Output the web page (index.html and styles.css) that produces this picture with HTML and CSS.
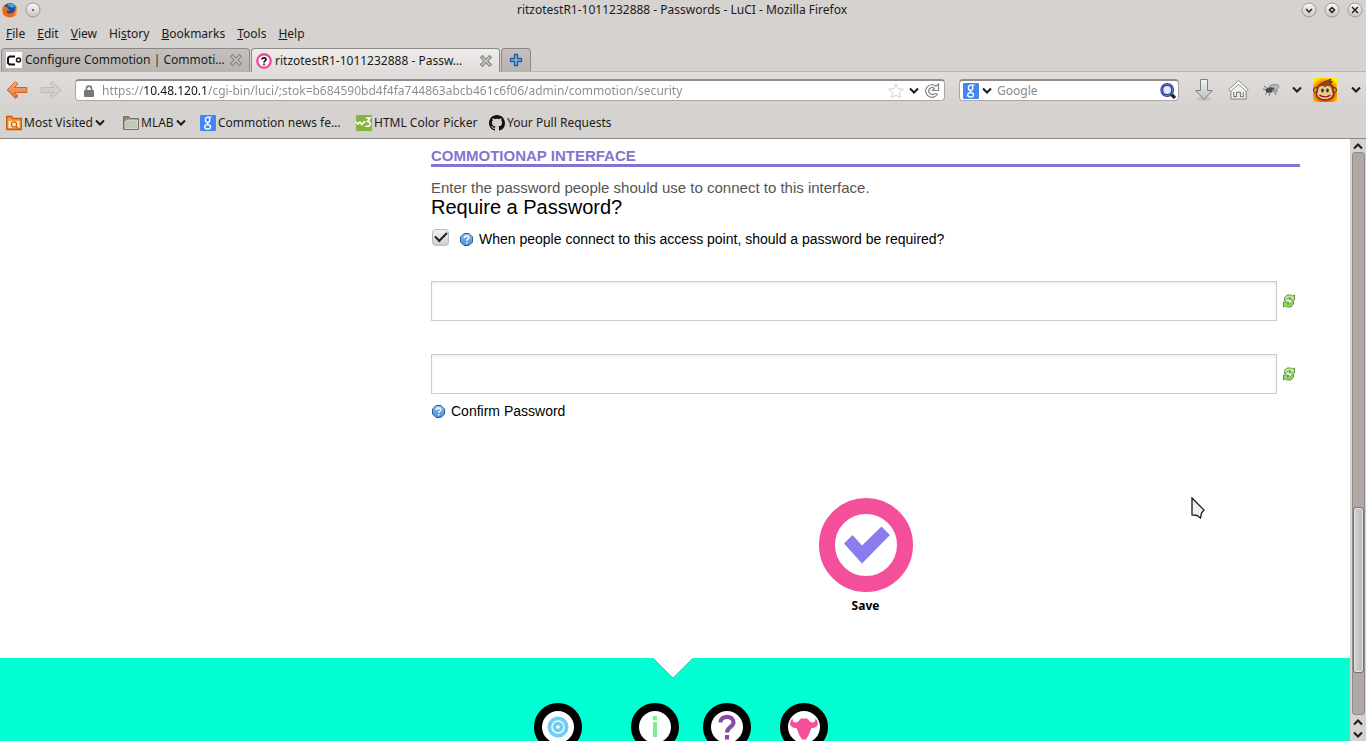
FILE: index.html
```html
<!DOCTYPE html>
<html lang="en">
<head>
<meta charset="utf-8">
<title>ritzotestR1-1011232888 - Passwords - LuCI</title>
<link rel="stylesheet" href="styles.css">
</head>
<body>
<svg class="defs" aria-hidden="true">
  <defs>
    <linearGradient id="g-orange" x1="0" y1="0" x2="0" y2="1"><stop offset="0" stop-color="#f8b184"/><stop offset="1" stop-color="#e8702a"/></linearGradient>
    <linearGradient id="g-button" x1="0" y1="0" x2="0" y2="1"><stop offset="0" stop-color="#fafafa"/><stop offset="1" stop-color="#c9c6c3"/></linearGradient>
    <linearGradient id="g-grey" x1="0" y1="0" x2="0" y2="1"><stop offset="0" stop-color="#f4f4f2"/><stop offset="1" stop-color="#b9c0c4"/></linearGradient>
    <linearGradient id="g-blue" x1="0" y1="0" x2="0" y2="1"><stop offset="0" stop-color="#8fc0ee"/><stop offset="1" stop-color="#3f8fe0"/></linearGradient>
    <radialGradient id="g-fire" cx="50%" cy="60%" r="65%"><stop offset="0" stop-color="#f03000"/><stop offset=".6" stop-color="#ff5a00"/><stop offset="1" stop-color="#fff000"/></radialGradient>
    <symbol id="chevron" viewBox="0 0 10 8"><path d="M1 1.5l4 4 4-4" fill="none" stroke="#1b1b1b" stroke-width="2"/></symbol>
    <symbol id="google" viewBox="0 0 16 16"><rect width="16" height="16" rx="1" fill="#4285f4"/><ellipse cx="7.6" cy="4.8" rx="2.2" ry="2.7" fill="none" stroke="#fff" stroke-width="1.4"/><path d="M8.5 2h3.2M8.6 7.4c-2 1-1.600 1.500-.2 2.300" fill="none" stroke="#fff" stroke-width="1.200"/><ellipse cx="7.600" cy="11.800" rx="2.900" ry="2.200" fill="none" stroke="#fff" stroke-width="1.400"/></symbol>
    <symbol id="close" viewBox="0 0 12 12"><path d="M2.500 2.500l7 7M9.500 2.500l-7 7" stroke="#85857f" stroke-width="3.800" stroke-linecap="square"/><path d="M2.500 2.500l7 7M9.500 2.500l-7 7" stroke="#c6c4be" stroke-width="1.600" stroke-linecap="square"/></symbol>
    <symbol id="hint" viewBox="0 0 13 13"><path d="M4 .5h5l3.500 3.500v5L9 12.500H4L.5 9V4z" fill="url(#g-blue)" stroke="#2d5f93"/><path d="M4.500 5c0-2.600 4.200-2.600 4.200-.2 0 1.500-2 1.500-2 3M6.700 9v1.500" fill="none" stroke="#fff" stroke-width="1.500"/></symbol>
    <symbol id="refresh" viewBox="0 0 12 14"><path d="M1.500 6.500V4L4 1h4.500l1.200 1.200L11.500 1v5H6.200v-1L8 4H5L3 6.500z" fill="#c4ec9e" stroke="#4f8f2a" stroke-width=".9"/><path d="M10.500 7.500V10L8 13H3.500l-1.200-1.200L.5 13V8h5.300v1L4 10h3l2-2.500z" fill="#9ddc62" stroke="#4f8f2a" stroke-width=".9"/></symbol>
  </defs>
</svg>

<header class="browser">
  <div class="titlebar">
    <svg class="ico-16" viewBox="0 0 16 16"><circle cx="8" cy="8" r="7" fill="#1c4f9c"/><path d="M5 3c2-2 6-2 8 1l-3 2z" fill="#4aa3e0"/><path d="M2 2.500C0 6-1 12 4 14.500c5 2.500 11-.5 11.200-6C15.200 6 14 4 13 3c.5 2 .5 3 0 4-.5 4-4 5-6.500 4.500C5 11 4 9.500 4.500 8.500c1.500.7 3 0 3.500-1C6 7.500 5.500 6.500 6 5.500 4.500 5.500 3 4.500 2 2.500z" fill="#ee6a13"/><path d="M14 4c1 3 .5 7-3 9 3-.5 4.500-3 4.300-5.500z" fill="#ffc62e"/></svg>
    <button class="round" aria-label="Window menu"><svg viewBox="0 0 16 16"><circle cx="8" cy="8" r="7" fill="url(#g-button)" stroke="#9b9896"/><circle cx="8" cy="8" r="1" fill="#444"/></svg></button>
    <span class="window-title">ritzotestR1-1011232888 - Passwords - LuCI - Mozilla Firefox</span>
    <div class="window-buttons">
      <button class="round" aria-label="Minimize"><svg viewBox="0 0 16 16"><circle cx="8" cy="8" r="7" fill="url(#g-button)" stroke="#9b9896"/><path d="M5 7l3 3 3-3" fill="none" stroke="#222" stroke-width="1.500"/></svg></button>
      <button class="round" aria-label="Maximize"><svg viewBox="0 0 16 16"><circle cx="8" cy="8" r="7" fill="url(#g-button)" stroke="#9b9896"/><path d="M8 5.500L10.500 8 8 10.500 5.500 8z" fill="none" stroke="#222" stroke-width="1.500"/></svg></button>
      <button class="round" aria-label="Close"><svg viewBox="0 0 16 16"><circle cx="8" cy="8" r="7" fill="url(#g-button)" stroke="#9b9896"/><path d="M5 5l6 6M11 5l-6 6" stroke="#222" stroke-width="1.500"/></svg></button>
    </div>
  </div>

  <nav class="menubar" aria-label="Menu">
    <button><u>F</u>ile</button><button><u>E</u>dit</button><button><u>V</u>iew</button><button>Hi<u>s</u>tory</button><button><u>B</u>ookmarks</button><button><u>T</u>ools</button><button><u>H</u>elp</button>
  </nav>

  <div class="tabs">
    <div class="tab">
      <svg class="ico-16" viewBox="0 0 16 16"><rect width="16" height="16" fill="#fff"/><path d="M9 4.500H3.500L2 6v5l1.500 1.500H9" fill="none" stroke="#111" stroke-width="2"/><circle cx="12.500" cy="8" r="2" fill="none" stroke="#111" stroke-width="1.500"/></svg>
      <span class="tab-label">Configure Commotion | Commoti…</span>
      <button class="tab-close" aria-label="Close tab"><svg><use href="#close"/></svg></button>
    </div>
    <div class="tab tab-active">
      <svg class="ico-16" viewBox="0 0 16 16"><circle cx="8" cy="8" r="6.700" fill="#fff" stroke="#f24c9c" stroke-width="2.400"/><path d="M6 6.600c0-2.400 4-2.400 4 0 0 1.400-2 1.200-2 2.900M8 10.400v1.800" fill="none" stroke="#111" stroke-width="1.700"/></svg>
      <span class="tab-label">ritzotestR1-1011232888 - Passw…</span>
      <button class="tab-close" aria-label="Close tab"><svg><use href="#close"/></svg></button>
    </div>
    <button class="tab-new" aria-label="New tab"><svg viewBox="0 0 14 14"><path d="M5.500 1.500h3v4h4v3h-4v4h-3v-4h-4v-3h4z" fill="#7faede" stroke="#275a98" stroke-width="1.300" stroke-linejoin="round"/></svg></button>
  </div>

  <div class="navbar">
    <button class="nav-arrow" aria-label="Back"><svg viewBox="0 0 22 20"><path d="M9.500 1.500L1.200 10l8.300 8.500 2.500-2.500-3.500-3.500h12.300v-5H8.500L12 4z" fill="url(#g-orange)" stroke="#d4601f" stroke-linejoin="round"/></svg></button>
    <button class="nav-arrow" aria-label="Forward"><svg viewBox="0 0 22 20"><path d="M12.500 1.500l8.300 8.500-8.300 8.500L10 16l3.500-3.500H1.200v-5h12.300L10 4z" fill="#d2cfcc" stroke="#bbb8b5" stroke-linejoin="round"/></svg></button>
    <div class="field field-url">
      <svg class="lock" viewBox="0 0 10 12"><path d="M2.500 6V3.500c0-3.200 5-3.200 5 0V6" fill="none" stroke="#777" stroke-width="1.600"/><rect y="5" width="10" height="7" rx="1" fill="#777"/></svg>
      <input class="url" type="text" aria-label="Address" value="https://10.48.120.1/cgi-bin/luci/;stok=b684590bd4f4fa744863abcb461c6f06/admin/commotion/security">
      <svg class="ico-16" viewBox="0 0 16 16"><path d="M8 1l2 4.800 5.200.4-4 3.400 1.300 5.100L8 12l-4.500 2.700 1.300-5.100-4-3.400L6 5.800z" fill="#fff" stroke="#cfcfcf"/></svg>
      <svg class="chevron"><use href="#chevron"/></svg>
      <svg class="ico-16" viewBox="0 0 16 16"><path d="M13.500 11A6.300 6.300 0 1 1 12 3.200L14.500 1v6.500H8.500L10.300 5.300A3.400 3.400 0 1 0 10.500 10.500" fill="none" stroke="#858585" stroke-width="1.200"/><path d="M13.500 11l-3-.5" stroke="#858585" stroke-width="1.200"/></svg>
    </div>
    <div class="field field-search">
      <svg class="ico-16"><use href="#google"/></svg>
      <svg class="chevron"><use href="#chevron"/></svg>
      <input class="search" type="text" aria-label="Search" placeholder="Google">
      <svg class="ico-16" viewBox="0 0 16 16"><path d="M11 11l4 4" stroke="#222" stroke-width="3.200"/><circle cx="7.200" cy="7" r="5.400" fill="#e6eefc" stroke="#26398f" stroke-width="3"/><circle cx="7.200" cy="7" r="5.600" fill="none" stroke="#6c85d8"/></svg>
    </div>
    <div class="tools">
      <button class="tool-download" aria-label="Downloads"><svg viewBox="0 0 18 22"><ellipse cx="9" cy="20" rx="8" ry="2" fill="#c4c1be"/><path d="M5.500.5h7v11h4.800L9 20.500.700 11.500h4.800z" fill="url(#g-grey)" stroke="#7b7f80"/></svg></button>
      <button class="tool-home" aria-label="Home"><svg viewBox="0 0 22 22"><path d="M3 11v9.500h16V11l-8-7z" fill="#f2f1ef" stroke="#7d7d7a"/><path d="M11 1L.7 10.800l1.800 1.800L11 5l8.500 7.600 1.800-1.800z" fill="#fff" stroke="#858582"/><path d="M6 13v5h3v-4.500h4V18h3v-5" fill="none" stroke="#858582" stroke-width="1.300"/></svg></button>
      <button class="tool-fly" aria-label="Firebug"><svg viewBox="0 0 18 14"><path d="M1 6l5 1M3 12l4-4M7 13l1.500-4M13 10l1 2M2 3l4 3" stroke="#777" stroke-width="1"/><ellipse cx="11.500" cy="4.500" rx="5.500" ry="3" fill="#b5b7b9" stroke="#777" stroke-width=".6" transform="rotate(-15 11.500 4.500)"/><ellipse cx="8" cy="7" rx="4.500" ry="2.500" fill="#4a4d50" transform="rotate(-15 8 7)"/><ellipse cx="13" cy="8" rx="3" ry="1.800" fill="#9a9da0"/></svg></button>
      <button class="tool-more" aria-label="Firebug options"><svg class="chevron"><use href="#chevron"/></svg></button>
      <button class="tool-monkey" aria-label="Greasemonkey"><svg viewBox="0 0 24 24"><rect width="24" height="24" fill="url(#g-fire)"/><circle cx="3" cy="12" r="2.500" fill="#d99a58" stroke="#5d2d0c"/><circle cx="21" cy="12" r="2.500" fill="#d99a58" stroke="#5d2d0c"/><path d="M4 14C3 6 9 5 18 1l-1.500 3 3-.5L17 6c4 2 4 5 3.500 8 2 5-2 8-8.500 8s-10-3-8-8z" fill="#8a4a16" stroke="#54290b" stroke-width=".8"/><path d="M5.500 10.500c1-3.500 5.500-3 6.500-1 1-2 5.500-2.500 6.500 1 .2 2 .5 3 1.200 4.500 0 4-3.700 6-7.700 6s-8-2-7.700-6c.7-1.500 1-2.500 1.200-4.500z" fill="#f3c78c"/><ellipse cx="9.500" cy="12.500" rx="1.300" ry="2" fill="#12372b"/><ellipse cx="14.500" cy="12.500" rx="1.300" ry="2" fill="#12372b"/><path d="M6.500 17c3 2.500 8 2.500 11 0" fill="none" stroke="#8a1a12" stroke-width="1.300"/></svg></button>
      <button class="tool-more" aria-label="Greasemonkey options"><svg class="chevron"><use href="#chevron"/></svg></button>
    </div>
  </div>

  <nav class="bookmarks" aria-label="Bookmarks">
    <button class="bm bm-visited"><svg class="ico-16" viewBox="0 0 16 16"><path d="M.7 14.500V1.500h5l1 2h8.600v11z" fill="#f39a45" stroke="#c75d0b" stroke-width="1.400"/><path d="M2.500 6h11v7h-11z" fill="#fbe3c6"/><circle cx="8" cy="9.500" r="2.600" fill="none" stroke="#d0660f" stroke-width="1.300"/><path d="M10 11.500l3 2.500" stroke="#c75d0b" stroke-width="1.500"/></svg><span>Most Visited</span><svg class="chevron"><use href="#chevron"/></svg></button>
    <button class="bm bm-mlab"><svg class="ico-16" viewBox="0 0 16 16"><path d="M.7 14.300V1.700h5l1.500 2h8.100v10.600z" fill="#8e937e" stroke="#5c5f50"/><path d="M2 13.500V6.500l4-1.500h8.500v8.500z" fill="#c3c7b4" stroke="#e0e2d6" stroke-width=".8"/></svg><span>MLAB</span><svg class="chevron"><use href="#chevron"/></svg></button>
    <a class="bm bm-news" href="#"><svg class="ico-16"><use href="#google"/></svg><span>Commotion news fe…</span></a>
    <a class="bm bm-picker" href="#"><svg class="ico-16" viewBox="0 0 16 16"><rect width="16" height="16" rx="1" fill="#86b441"/><path d="M0 7l2 2 2-2 2 2.500L9 6M10 3h4l-2.500 3.500c4 0 4 6-2 4.500" fill="none" stroke="#fff" stroke-width="1.700"/></svg><span>HTML Color Picker</span></a>
    <a class="bm" href="#"><svg class="ico-16" viewBox="0 0 16 16"><path fill="#111" d="M8 0C3.580 0 0 3.580 0 8c0 3.540 2.290 6.530 5.470 7.590.4.070.55-.17.55-.38 0-.19-.01-.82-.01-1.490-2.010.37-2.530-.49-2.690-.94-.09-.23-.48-.94-.82-1.130-.28-.15-.68-.52-.01-.53.63-.01 1.080.58 1.230.82.72 1.210 1.870.87 2.330.66.07-.52.28-.87.51-1.070-1.780-.2-3.640-.89-3.640-3.950 0-.87.31-1.590.82-2.150-.08-.2-.36-1.020.08-2.120 0 0 .67-.21 2.200.82.64-.18 1.320-.27 2-.27s1.360.09 2 .27c1.530-1.040 2.200-.82 2.200-.82.44 1.100.16 1.920.08 2.120.51.56.82 1.270.82 2.150 0 3.070-1.870 3.750-3.650 3.950.29.25.54.73.54 1.480 0 1.070-.01 1.930-.01 2.200 0 .21.15.46.55.38A8.010 8.010 0 0 0 16 8c0-4.420-3.580-8-8-8z"/></svg><span>Your Pull Requests</span></a>
  </nav>
</header>

<div class="viewport">
  <main class="page">
    <form class="settings">
      <h2>COMMOTIONAP INTERFACE</h2>
      <p class="intro">Enter the password people should use to connect to this interface.</p>
      <h3>Require a Password?</h3>
      <div class="check-row">
        <input class="check" type="checkbox" id="require" checked>
        <svg class="hint"><use href="#hint"/></svg>
        <label for="require">When people connect to this access point, should a password be required?</label>
      </div>
      <div class="pw-row">
        <input class="pw" type="password" aria-label="Password">
        <button class="reveal" type="button" aria-label="Reveal password"><svg><use href="#refresh"/></svg></button>
      </div>
      <div class="pw-row">
        <input class="pw" type="password" id="confirm">
        <button class="reveal" type="button" aria-label="Reveal confirmation"><svg><use href="#refresh"/></svg></button>
      </div>
      <div class="confirm-row">
        <svg class="hint"><use href="#hint"/></svg>
        <label for="confirm">Confirm Password</label>
      </div>
      <button class="save" type="button">
        <svg viewBox="0 0 94 94"><circle cx="47" cy="47" r="39" fill="#fff" stroke="#f44f9b" stroke-width="16"/><path d="M25 45.500l8.500-8.500L43 47.500l19.500-19 8.500 8.500L43 65.500z" fill="#8a7ced"/></svg>
        <span>Save</span>
      </button>
    </form>
    <footer class="footer">
      <svg class="notch" viewBox="0 0 40 20"><path d="M0 0l20 20L40 0z" fill="#fff"/><path d="M0 0l20 20L40 0" fill="none" stroke="#5a9c8c" stroke-width=".7"/></svg>
      <nav class="footer-links" aria-label="Footer">
        <a class="fl-home" href="#" aria-label="Home"><svg viewBox="0 0 48 48"><circle cx="24" cy="24" r="20" fill="#fff" stroke="#000" stroke-width="8"/><circle cx="24" cy="24" r="8.600" fill="none" stroke="#72cdf4" stroke-width="3.800"/><circle cx="24" cy="24" r="3.600" fill="none" stroke="#72cdf4" stroke-width="3.600"/></svg></a>
        <a class="fl-info" href="#" aria-label="About"><svg viewBox="0 0 48 48"><circle cx="24" cy="24" r="20" fill="#fff" stroke="#000" stroke-width="8"/><path d="M22 13h4v4h-4zM22 19h4v15h-4z" fill="#72f58a"/></svg></a>
        <a class="fl-help" href="#" aria-label="Help"><svg viewBox="0 0 48 48"><circle cx="24" cy="24" r="20" fill="#fff" stroke="#000" stroke-width="8"/><path d="M17.500 19.500c0-7.500 13-7.500 13 0 0 4.500-6.500 4.500-6.500 10M24 32v4.500" fill="none" stroke="#874e9e" stroke-width="4.200"/></svg></a>
        <a class="fl-bug" href="#" aria-label="Report a problem"><svg viewBox="0 0 48 48"><circle cx="24" cy="24" r="20" fill="#fff" stroke="#000" stroke-width="8"/><path d="M12.500 15.500c-4 4-3 10 4 9.500l3 7.500 2.500 4h4l2.500-4 3-7.500c7 .5 8-5.500 4-9.500 0 4-2.500 4.500-5 3.500l-3.500-3.500h-6l-3.500 3.500c-2.500 1-5 .5-5-3.500z" fill="#f44f9b"/></svg></a>
      </nav>
    </footer>
  </main>
  <div class="scrollbar" aria-hidden="true">
    <svg class="sb-arrow"><use href="#chevron" transform="rotate(180 5 4)"/></svg>
    <div class="sb-track"><div class="sb-thumb"></div></div>
    <svg class="sb-arrow"><use href="#chevron" transform="rotate(180 5 4)"/></svg>
    <svg class="sb-arrow"><use href="#chevron"/></svg>
  </div>
</div>
<svg class="cursor" viewBox="0 0 14 22" aria-hidden="true"><path d="M1 1v17l5 .5 3.500 2.500 1-5L13 13z" fill="#f0f0f0" stroke="#1a1a1a" stroke-width="1.300"/></svg>
</body>
</html>
```
FILE: styles.css
```css
* { box-sizing: border-box; }
body {
  margin: 0;
  height: 100vh;
  display: flex;
  flex-direction: column;
  overflow: hidden;
  background: #fff;
  font-family: "Liberation Sans", Arial, sans-serif;
}
button {
  padding: 0;
  border: 0;
  background: none;
  color: inherit;
  font: inherit;
}
svg { display: block; flex: none; }
a { color: inherit; text-decoration: none; }
.defs { position: absolute; width: 0; height: 0; }
.ico-16 { width: 16px; height: 16px; }
.chevron { width: 10px; height: 8px; }

/* Browser window */
.browser {
  flex: none;
  background: #d6d2cf;
  border-bottom: 1px solid #8c8885;
  color: #1b1b1b;
  font-family: "Noto Sans", sans-serif;
  font-size: 12px;
  line-height: 16px;
}
.titlebar {
  display: flex;
  align-items: center;
  height: 20px;
  padding: 0 3px 0 2px;
  gap: 7px;
}
.round svg { width: 16px; height: 16px; }
.window-title { flex: 1; text-align: center; padding-left: 22px; }
.window-buttons { display: flex; gap: 7px; }
.menubar {
  display: flex;
  gap: 12px;
  height: 28px;
  padding: 0 6px;
  align-items: center;
}
.tabs {
  display: flex;
  gap: 1px;
  height: 24px;
  padding-left: 1px;
  border-bottom: 1px solid #b8b4b1;
}
.tab {
  display: flex;
  align-items: center;
  gap: 3px;
  width: 249px;
  padding: 0 7px 0 4px;
  border: 1px solid #8c8885;
  border-bottom: 0;
  border-radius: 4px 4px 0 0;
  background: linear-gradient(#c5c0be, #b9b4b2);
}
.tab-active { background: linear-gradient(#efedec, #e0dddb); margin-bottom: -1px; }
.tab-label { flex: 1; overflow: hidden; white-space: nowrap; }
.tab-close svg { width: 12px; height: 12px; }
.tab-new {
  width: 30px;
  border: 1px solid #8c8885;
  border-bottom: 0;
  border-radius: 4px 4px 0 0;
  background: linear-gradient(#c5c0be, #b9b4b2);
}
.tab-new svg { width: 14px; height: 14px; margin: 0 auto; }
.navbar {
  display: flex;
  align-items: center;
  height: 36px;
  padding: 0 5px 0 6px;
  background: linear-gradient(#e1dddc, #d6d2cf);
}
.nav-arrow { margin-right: 12px; }
.nav-arrow svg { width: 22px; height: 20px; }
.field {
  display: flex;
  align-items: center;
  height: 22px;
  background: #fff;
  border: 1px solid #aaa6a3;
  border-top: 2px solid #918d8a;
  border-radius: 4px;
}
.field input {
  flex: 1;
  min-width: 0;
  border: 0;
  padding: 0;
  background-color: transparent;
  font: inherit;
  outline: 0;
}
.field-url { flex: 1; margin: 0 14px 0 1px; padding: 0 4px 0 8px; gap: 5px; }
.lock { width: 10px; height: 12px; margin-right: 3px; }
.field .url {
  color: transparent;
  background-image: linear-gradient(90deg, #8a8a8a 42px, #111 42px, #111 106px, #8a8a8a 106px);
  -webkit-background-clip: text;
  background-clip: text;
}
.field-search { width: 220px; padding: 0 2px 0 3px; gap: 3px; }
.field .search { margin-left: 2px; }
.search::placeholder { color: #8a8a8a; opacity: 1; }
.tools { display: flex; align-items: center; }
.tool-download { margin-left: 16px; }
.tool-download svg { width: 18px; height: 22px; }
.tool-home { margin: 0 13px 0 15px; }
.tool-home svg { width: 21px; height: 22px; }
.tool-fly svg { width: 18px; height: 14px; }
.tool-more { margin: 0 0 0 12px; }
.tool-monkey { margin: 0 2px 0 11px; }
.tool-monkey svg { width: 24px; height: 24px; }
.bookmarks {
  display: flex;
  align-items: center;
  height: 30px;
  padding: 0 6px;
}
.bm { display: flex; align-items: center; gap: 2px; }
.bm-visited { width: 117px; }
.bm-mlab { width: 77px; }
.bm-news { width: 156px; }
.bm-picker { width: 133px; }

/* Web page */
.viewport { flex: 1; min-height: 0; display: flex; }
.page { flex: 1; min-width: 0; overflow: hidden; }
.settings {
  display: flex;
  flex-direction: column;
  height: 519px;
  padding: 8px 50px 0 431px;
}
.settings h2 {
  margin: 0 0 12px;
  border-bottom: 3px solid #8375cf;
  color: #8375cf;
  font-size: 15px;
  line-height: 17px;
}
.intro { margin: 0; color: #555; font-size: 15px; line-height: 18px; }
.settings h3 { margin: 0; font-size: 20px; font-weight: 400; line-height: 20px; }
.check-row {
  display: flex;
  align-items: center;
  height: 20px;
  margin: 12px 0 32px;
  font-size: 14px;
}
.check {
  appearance: none;
  display: grid;
  place-items: center;
  width: 17px;
  height: 17px;
  margin: 0 11px 4px 1px;
  border: 1px solid #bbb8b6;
  border-radius: 4px;
  background: linear-gradient(#f2f2f2, #d2d0ce);
}
.check:checked::before {
  content: "";
  width: 10px;
  height: 5px;
  margin-bottom: 3px;
  border: solid #222;
  border-width: 0 0 2px 2px;
  transform: rotate(-45deg);
}
.hint { width: 13px; height: 13px; margin-right: 6px; }
.pw-row { display: flex; align-items: center; gap: 6px; padding-right: 5px; margin-bottom: 33px; }
.pw {
  flex: 1;
  height: 40px;
  padding: 0 8px;
  border: 1px solid #ccc;
  background: #fff;
  box-shadow: inset 0 2px 3px #eee;
}
.reveal svg { width: 12px; height: 14px; }
.confirm-row {
  display: flex;
  align-items: center;
  height: 16px;
  margin: -24px 0 79px 1px;
  font-size: 14px;
}
.save {
  align-self: center;
  display: flex;
  flex-direction: column;
  align-items: center;
  gap: 5px;
  font: 700 12px/18px "Noto Sans", sans-serif;
}
.save svg { width: 94px; height: 94px; }
.footer {
  display: flex;
  flex-direction: column;
  align-items: center;
  gap: 25px;
  height: 160px;
  background: #00ffd2;
}
.notch { width: 40px; height: 20px; margin-right: 4px; }
.footer-links { display: flex; }
.footer-links a { display: flex; justify-content: center; }
.footer-links svg { width: 48px; height: 48px; }
.fl-home { width: 114px; }
.fl-info { width: 80px; }
.fl-help { width: 64px; }
.fl-bug { width: 90px; }

.scrollbar {
  display: flex;
  flex-direction: column;
  align-items: center;
  width: 16px;
  background: #d6d2cf;
}
.sb-arrow { width: 10px; height: 8px; margin: 3px 0 2px; }
.sb-track {
  flex: 1;
  display: flex;
  flex-direction: column;
  width: 13px;
  border: 1px solid #8f8b88;
  border-radius: 3px;
  background: #b0a8a5;
}
.sb-thumb {
  height: 166px;
  margin: auto 0 41px;
  border: 1px solid #77726f;
  border-radius: 3px;
  background: linear-gradient(90deg, #d5d2d0, #bdb8b6);
  box-shadow: inset 0 0 0 1px #e4e2e0;
}
.cursor { position: absolute; left: 1191px; top: 497px; width: 14px; height: 22px; }
```
